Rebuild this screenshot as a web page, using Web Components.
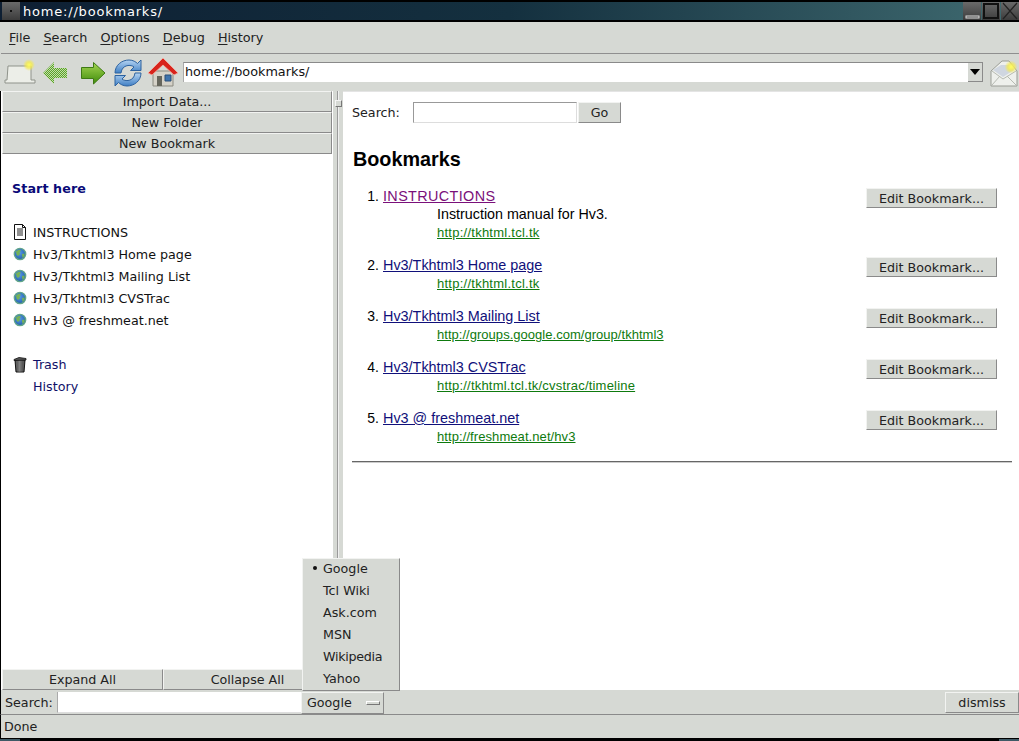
<!DOCTYPE html>
<html><head><meta charset="utf-8">
<style>
html,body{margin:0;padding:0;height:741px;overflow:hidden;background:#000}
body{font:12.7px "DejaVu Sans",sans-serif;color:#000}
</style></head><body>
<hv3-window>
  <hv3-titlebar>home://bookmarks/</hv3-titlebar>
  <hv3-menubar></hv3-menubar>
  <hv3-toolbar></hv3-toolbar>
  <hv3-panes>
    <hv3-sidebar></hv3-sidebar>
    <hv3-sash></hv3-sash>
    <hv3-content></hv3-content>
  </hv3-panes>
  <hv3-findbar></hv3-findbar>
  <hv3-status>Done</hv3-status>
  <hv3-frame></hv3-frame>
  <hv3-popup></hv3-popup>
</hv3-window>
<script>
function def(name,html){
  customElements.define(name,class extends HTMLElement{
    constructor(){super();this.attachShadow({mode:'open'}).innerHTML=html;}
  });
}
const globe=`<svg width="14" height="14" viewBox="0 0 14 14"><defs><radialGradient id="g" cx=".45" cy=".4" r=".65"><stop offset="0" stop-color="#5a9be6"/><stop offset="1" stop-color="#1d5aa8"/></radialGradient></defs><circle cx="7" cy="7" r="5.700" fill="url(#g)" stroke="#62a58a" stroke-width="1.300"/><path d="M3 4.500 6 2.500 8 3.500 6.500 5.500 7 7 5 9 3.500 7.500ZM9 7 11.500 6.500 11.500 9 9.500 11Z" fill="#76b356"/></svg>`;
const doc=`<svg width="14" height="16" viewBox="0 0 14 16"><path d="M1.500.5H9.500L12.500 3.500V15.500H1.500Z" fill="#fff" stroke="#111"/><path d="M9.500.5V3.500H12.500" fill="none" stroke="#111"/><path d="M4 5H10M4 7H10M4 9H10M4 11H10" stroke="#222"/></svg>`;
const trash=`<svg width="14" height="17" viewBox="0 0 14 17"><defs><linearGradient id="t" x1="0" x2="1"><stop offset="0" stop-color="#333"/><stop offset=".45" stop-color="#bbb"/><stop offset="1" stop-color="#333"/></linearGradient></defs><path d="M2 4 3 16H11L12 4Z" fill="url(#t)" stroke="#111"/><path d="M5 5V15M7 5V15M9 5V15" stroke="#444"/><path d="M1 3.500 6 1.500 13 2.500V4L1 4.500Z" fill="#555" stroke="#111" stroke-width=".8"/></svg>`;

def('hv3-titlebar',`<style>
:host{display:flex;height:22px;box-sizing:border-box;border-top:2px solid #000;border-bottom:2px solid #000;align-items:center;color:#fff;background:linear-gradient(90deg,#0e1f33,#14303f 50%,#3f6a70);font:13px "DejaVu Sans",sans-serif;letter-spacing:.8px}
.b{width:18px;height:18px;box-sizing:border-box;background:linear-gradient(#6a6a6a,#3c3c3c);display:flex;align-items:center;justify-content:center;flex:none}
.t{flex:1;padding-left:3px;margin-top:1px}
.r{display:flex;gap:1px}
</style>
<div class="b" style="margin-left:2px"><svg width="4" height="4"><rect x="1" y="1" width="2" height="2" fill="#111"/></svg></div>
<div class="t"><slot></slot></div>
<div class="r">
<div class="b"><svg width="18" height="18"><rect x="3" y="14" width="13" height="2" fill="none" stroke="#ddd" stroke-width="1"/></svg></div>
<div class="b"><svg width="18" height="18"><rect x="2" y="2" width="14" height="14" fill="none" stroke="#111" stroke-width="2"/></svg></div>
<div class="b"><svg width="18" height="18"><path d="M2 1 16 17M16 1 2 17" stroke="#222" stroke-width="1.200"/></svg></div>
</div>`);

def('hv3-menubar',`<style>
:host{display:flex;height:32px;box-sizing:border-box;background:#d6d9d4;border-bottom:1px solid #8f8f8f;margin-left:1px;padding:0 0 0 8px;gap:13px;align-items:center;font:12.8px "DejaVu Sans",sans-serif;color:#222}
u{text-decoration:underline;text-underline-offset:2px}
</style>
<span><u>F</u>ile</span><span><u>S</u>earch</span><span><u>O</u>ptions</span><span><u>D</u>ebug</span><span><u>H</u>istory</span>`);

def('hv3-toolbar',`<style>
:host{display:flex;height:37px;box-sizing:border-box;background:#d6d9d4;margin-left:1px;align-items:center;padding:0 1px 0 3px}
.ic{flex:none;display:block}
.url{flex:1;height:20px;box-sizing:border-box;margin:0 7px 0 4px;background:#fff;border-top:1px solid #8a8a8a;border-left:1px solid #aaa;display:flex;align-items:center;font:12.8px "DejaVu Sans",sans-serif;padding:0 0 0 1px;color:#111;position:relative;top:-1px}
.url span{flex:1;position:relative;top:-1px}
.arr{width:15px;height:19px;background:#d6d9d4;border-right:1px solid #8a8a8a;border-bottom:1px solid #8a8a8a;box-sizing:border-box;display:flex;align-items:center;justify-content:center}
</style>
<svg class="ic" style="margin:-2px 6px 0 0" width="32" height="26" viewBox="0 0 32 26"><defs><radialGradient id="sp"><stop offset="0" stop-color="#ffff60"/><stop offset=".5" stop-color="#f4ea50" stop-opacity=".8"/><stop offset="1" stop-color="#f4ea50" stop-opacity="0"/></radialGradient></defs><path d="M4 7H27V21H31V24H1V21H3Z" fill="#eceee8" stroke="#8f938b"/><circle cx="25" cy="6" r="6" fill="url(#sp)"/></svg>
<svg class="ic" style="margin-right:12px" width="26" height="24" viewBox="0 0 26 24"><defs><pattern id="dth" width="2" height="2" patternUnits="userSpaceOnUse"><rect width="2" height="2" fill="#c3e0a6"/><rect width="1" height="1" fill="#5aa02c"/><rect x="1" y="1" width="1" height="1" fill="#5aa02c"/></pattern></defs><path d="M12 1 1 12 12 23V17H25V7H12Z" fill="url(#dth)"/></svg>
<svg class="ic" style="margin-right:7px" width="26" height="24" viewBox="0 0 26 24"><defs><linearGradient id="ar" x1="0" y1="0" x2="0" y2="1"><stop offset="0" stop-color="#a4d552"/><stop offset="1" stop-color="#3f8c0a"/></linearGradient></defs><path d="M13.500 1.500 25 12 13.500 23V17.500H1.500V6.500H13.500Z" fill="url(#ar)" stroke="#3e7a14"/></svg>
<svg class="ic" style="margin-right:4px" width="30" height="30" viewBox="0 0 30 30"><defs><linearGradient id="rf" x1="0" y1="0" x2="0" y2="1"><stop offset="0" stop-color="#b5d4f2"/><stop offset="1" stop-color="#3f7fc4"/></linearGradient></defs><path d="M2 15C2 7 9 2 16 2 20 2 23 4 24.500 5.500L28 2V12.500H17.500L21 9C18.500 6.500 9 6 8 15Z" fill="url(#rf)" stroke="#2d629f"/><path d="M28 15C28 23 21 28 14 28 10 28 7 26 5.500 24.500L2 28V17.500H12.500L9 21C11.500 23.500 21 24 22 15Z" fill="url(#rf)" stroke="#2d629f"/></svg>
<svg class="ic" width="32" height="32" viewBox="0 0 32 32"><path d="M6 14H26V29H6Z" fill="#d5d2c8" stroke="#8a8a80"/><path d="M10 19H15V29H10Z" fill="#66665c"/><path d="M18 18H24V24H18Z" fill="#3f74ad" stroke="#2b4f78"/><path d="M1 16 16 1 31 16 27 18 16 8 5 18Z" fill="#d8241c" stroke="#f3b5a8" stroke-width=".8"/></svg>
<div class="url"><span>home://bookmarks/</span><div class="arr"><svg width="10" height="6"><path d="M0 0H10L5 6Z" fill="#000"/></svg></div></div>
<svg class="ic" width="28" height="30" viewBox="1 0 28 30"><defs><radialGradient id="sp2"><stop offset="0" stop-color="#ffff60"/><stop offset=".5" stop-color="#f4ea50" stop-opacity=".8"/><stop offset="1" stop-color="#f4ea50" stop-opacity="0"/></radialGradient></defs><path d="M2 13 13 3H20L28 13V28H2Z" fill="#eef0ec" stroke="#9a9d96"/><path d="M3 13 14 21 27 13M3 27 11 18M27 27 18 18" fill="none" stroke="#b6bab2"/><path d="M4 12 12 7 20 7 25 12 14 19Z" fill="#cfd6e0"/><circle cx="22" cy="9" r="6.500" fill="url(#sp2)"/></svg>`);

def('hv3-btn',`<style>
:host{display:flex;align-items:center;justify-content:center;box-sizing:border-box;background:#d6d9d4;border:1px solid;border-color:#f2f3f1 #8a8a8a #8a8a8a #f2f3f1;font:12.7px "DejaVu Sans",sans-serif;color:#222;white-space:nowrap}
</style><slot></slot>`);

def('hv3-panes',`<style>:host{display:flex;flex:1;min-height:0}</style><slot></slot>`);

def('hv3-sidebar',`<style>
:host{display:flex;flex-direction:column;width:333px;flex:none;background:#fff;border-left:1px solid #000;box-sizing:border-box;font:12.7px "DejaVu Sans",sans-serif}
hv3-btn{height:21px;width:330px;margin-left:1px}
.tree{flex:1;padding:27px 0 0 11px;color:#111}
.s{font-weight:bold;color:#0a0a78;font-size:12.700px;line-height:16px;margin-bottom:24px;letter-spacing:.1px}
.r{display:flex;height:22px;align-items:center;gap:6px}
.i{width:15px;display:flex;justify-content:center;flex:none}
.n{color:#101068}
.gap{height:22px}
.f{display:flex;margin-left:1px}
.f hv3-btn{height:21px;margin-left:0}
.f hv3-btn:first-child{width:161px}
.f hv3-btn:last-child{width:169px}
</style>
<div><hv3-btn>Import Data...</hv3-btn><hv3-btn>New Folder</hv3-btn><hv3-btn>New Bookmark</hv3-btn></div>
<div class="tree">
<div class="s">Start here</div>
<div class="r"><span class="i">${doc}</span><span>INSTRUCTIONS</span></div>
<div class="r"><span class="i">${globe}</span><span>Hv3/Tkhtml3 Home page</span></div>
<div class="r"><span class="i">${globe}</span><span>Hv3/Tkhtml3 Mailing List</span></div>
<div class="r"><span class="i">${globe}</span><span>Hv3/Tkhtml3 CVSTrac</span></div>
<div class="r"><span class="i">${globe}</span><span>Hv3 @ freshmeat.net</span></div>
<div class="gap"></div>
<div class="r n"><span class="i">${trash}</span><span>Trash</span></div>
<div class="r n"><span class="i"></span><span>History</span></div>
</div>
<div class="f"><hv3-btn>Expand All</hv3-btn><hv3-btn>Collapse All</hv3-btn></div>`);

def('hv3-sash',`<style>
:host{display:block;width:10px;flex:none;background:#d6d9d4;position:relative}
s{position:absolute;left:4px;top:0;bottom:0;width:1px;background:#9a9a9a;border-right:1px solid #f0f0f0}
i{position:absolute;left:2px;top:9px;width:7px;height:7px;background:#d6d9d4;border:1px solid;border-color:#f5f5f5 #777 #777 #f5f5f5;box-sizing:border-box}
</style><s></s><i></i>`);

const items=[
 ['INSTRUCTIONS','http://tkhtml.tcl.tk','Instruction manual for Hv3.',true,.25],
 ['Hv3/Tkhtml3 Home page','http://tkhtml.tcl.tk','',false,.25],
 ['Hv3/Tkhtml3 Mailing List','http://groups.google.com/group/tkhtml3','',false,.03],
 ['Hv3/Tkhtml3 CVSTrac','http://tkhtml.tcl.tk/cvstrac/timeline','',false,.2],
 ['Hv3 @ freshmeat.net','http://freshmeat.net/hv3','',false,.08]];
def('hv3-content',`<style>
:host{display:block;flex:1;background:#fff;padding:0 7px 0 9px;font:14.3px "Liberation Sans",sans-serif;color:#000;min-width:0;border-top:1px solid #e4e4e4}
.sr{display:flex;align-items:center;margin-top:10px;height:21px;font:12.7px "DejaVu Sans",sans-serif;color:#222}
.sr span{width:61px;flex:none}
.sr input{width:164px;height:21px;box-sizing:border-box;margin:0 1px 0 0;border:1px solid;border-color:#999 #ddd #ddd #999;background:#fff;padding:0}
.sr hv3-btn{width:43px;height:21px}
h1{font:bold 19.800px "Liberation Sans",sans-serif;margin:24px 0 17px 1px;line-height:24px}
ol{list-style:none;margin:0;padding:0}
li{display:flex;margin-bottom:15px}
.no{width:27px;text-align:right;flex:none;line-height:16px;font-size:14px}
.b{flex:1;margin-left:4px}
.t{font-size:14.4px;line-height:17px;display:flex;justify-content:space-between;height:18px}
.t a{color:#10107a;text-decoration:underline}
.t a.v{color:#7a107a;letter-spacing:.37px}
.d{margin:-1px 0 1px 54px;line-height:18px}
.u{margin-left:54px;line-height:18px;font-size:13px}
.u a{color:#0e7a0e;text-decoration:underline}
hv3-btn.e{width:131px;height:20px;margin-right:15px}
hr{margin:15px 0 0;height:0;border:0;border-top:1px solid #666;border-bottom:1px solid #ccc}
</style>
<div class="sr"><span>Search:</span><input><hv3-btn>Go</hv3-btn></div>
<h1>Bookmarks</h1>
<ol>${items.map((x,i)=>`<li><span class="no">${i+1}.</span><div class="b"><div class="t"><a class="${x[3]?'v':''}">${x[0]}</a><hv3-btn class="e">Edit Bookmark...</hv3-btn></div>${x[2]?`<div class="d">${x[2]}</div>`:''}<div class="u"><a style="letter-spacing:${x[4]}px">${x[1]}</a></div></div></li>`).join('')}</ol>
<hr>`);

def('hv3-findbar',`<style>
:host{display:flex;height:25px;box-sizing:border-box;background:#d6d9d4;border-left:1px solid #000;border-bottom:1px solid #8a8a8a;align-items:center;font:12.7px "DejaVu Sans",sans-serif;color:#222;padding:1px 0 0 4px}
span.l{width:52px;flex:none}
input{width:244px;height:21px;box-sizing:border-box;margin:0;border:0;border-left:1px solid #aaa;border-bottom:1px solid #ddd;background:#fff;padding:0}
.m{width:83px;height:22px;box-sizing:border-box;display:flex;align-items:center;padding-left:5px;gap:14px;border:1px solid;border-color:#f2f3f1 #8a8a8a #8a8a8a #f2f3f1;flex:none}
.m i{width:14px;height:4px;background:#d6d9d4;border:1px solid;border-color:#fff #777 #777 #fff;box-sizing:border-box}
.sp{flex:1}
hv3-btn{width:74px;height:21px}
</style>
<span class="l">Search:</span><input><div class="m"><span>Google</span><i></i></div><span class="sp"></span><hv3-btn>dismiss</hv3-btn>`);

def('hv3-status',`<style>
:host{display:flex;height:23px;box-sizing:border-box;background:#d6d9d4;border-left:1px solid #000;align-items:center;padding:0 0 0 3px;font:12.7px "DejaVu Sans",sans-serif;color:#222}
</style><slot></slot>`);

def('hv3-frame',`<style>
:host{display:flex;height:3px;background:#000;justify-content:space-between;align-items:flex-end}
i{display:block;width:20px;height:2px;background:#3f5a66}
</style><i></i><i></i>`);

def('hv3-popup',`<style>
:host{position:absolute;left:302px;top:558px;width:98px;height:133px;box-sizing:border-box;background:#d6d9d4;border:1px solid;border-color:#f2f3f1 #8a8a8a #8a8a8a #f2f3f1;font:12.7px "DejaVu Sans",sans-serif;color:#222;padding-left:20px}
div{height:22px;line-height:19px;position:relative}
b{position:absolute;left:-10px;top:7px;width:4px;height:4px;border-radius:50%;background:#111}
</style>
<div><b></b>Google</div><div>Tcl Wiki</div><div>Ask.com</div><div>MSN</div><div style="letter-spacing:-.3px">Wikipedia</div><div>Yahoo</div>`);

def('hv3-window',`<style>
:host{display:flex;flex-direction:column;height:741px;width:1019px;position:relative;background:#d6d9d4}
</style><slot></slot>`);
</script>
</body></html>
